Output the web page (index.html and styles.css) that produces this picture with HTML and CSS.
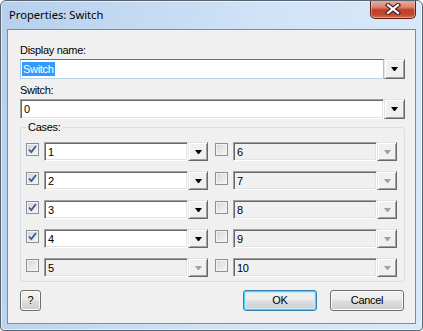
FILE: index.html
```html
<!DOCTYPE html>
<html>
<head>
<meta charset="utf-8">
<link rel="stylesheet" href="styles.css">
</head>
<body>
<div class="window">
  <div class="titlebar">
    <span class="title">Properties: Switch</span>
    <div class="close">
      <svg width="16" height="12" viewBox="0 0 16 12">
        <path d="M3 2 L13 10 M13 2 L3 10" stroke="#4a2018" stroke-width="4.4" stroke-linecap="square" fill="none"/>
        <path d="M3 2 L13 10 M13 2 L3 10" stroke="#ffffff" stroke-width="2.2" stroke-linecap="square" fill="none"/>
      </svg>
    </div>
  </div>
  <div class="client">
    <div class="label">Display name:</div>
    <div class="combo">
      <div class="edit focused"><span class="sel">Switch</span></div>
      <div class="drop wide"><svg width="7" height="4" viewBox="0 0 7 4"><polygon points="0,0 7,0 4,4 3,4" fill="#000"/></svg></div>
    </div>
    <div class="label second">Switch:</div>
    <div class="combo">
      <div class="edit sunken"><span class="txt">0</span></div>
      <div class="drop wide"><svg width="7" height="4" viewBox="0 0 7 4"><polygon points="0,0 7,0 4,4 3,4" fill="#000"/></svg></div>
    </div>
    <fieldset class="group">
      <legend>Cases:</legend>
      <div class="cases">
        <div class="case"><span class="cb checked"><svg width="11" height="11" viewBox="0 0 11 11"><path d="M2 5.5 L4.3 8 L9 2" stroke="#42578a" stroke-width="1.8" fill="none"/></svg></span><div class="edit sunken"><span class="txt">1</span></div><div class="drop"><svg width="7" height="4" viewBox="0 0 7 4"><polygon points="0,0 7,0 4,4 3,4" fill="#000"/></svg></div></div>
        <div class="case"><span class="cb checked"><svg width="11" height="11" viewBox="0 0 11 11"><path d="M2 5.5 L4.3 8 L9 2" stroke="#42578a" stroke-width="1.8" fill="none"/></svg></span><div class="edit sunken"><span class="txt">2</span></div><div class="drop"><svg width="7" height="4" viewBox="0 0 7 4"><polygon points="0,0 7,0 4,4 3,4" fill="#000"/></svg></div></div>
        <div class="case"><span class="cb checked"><svg width="11" height="11" viewBox="0 0 11 11"><path d="M2 5.5 L4.3 8 L9 2" stroke="#42578a" stroke-width="1.8" fill="none"/></svg></span><div class="edit sunken"><span class="txt">3</span></div><div class="drop"><svg width="7" height="4" viewBox="0 0 7 4"><polygon points="0,0 7,0 4,4 3,4" fill="#000"/></svg></div></div>
        <div class="case"><span class="cb checked"><svg width="11" height="11" viewBox="0 0 11 11"><path d="M2 5.5 L4.3 8 L9 2" stroke="#42578a" stroke-width="1.8" fill="none"/></svg></span><div class="edit sunken"><span class="txt">4</span></div><div class="drop"><svg width="7" height="4" viewBox="0 0 7 4"><polygon points="0,0 7,0 4,4 3,4" fill="#000"/></svg></div></div>
        <div class="case"><span class="cb"></span><div class="edit sunken disabled"><span class="txt">5</span></div><div class="drop disabled"><svg width="7" height="4" viewBox="0 0 7 4"><polygon points="0,0 7,0 4,4 3,4" fill="#a0a0a0"/></svg></div></div>
        <div class="case"><span class="cb"></span><div class="edit sunken disabled"><span class="txt">6</span></div><div class="drop disabled"><svg width="7" height="4" viewBox="0 0 7 4"><polygon points="0,0 7,0 4,4 3,4" fill="#a0a0a0"/></svg></div></div>
        <div class="case"><span class="cb"></span><div class="edit sunken disabled"><span class="txt">7</span></div><div class="drop disabled"><svg width="7" height="4" viewBox="0 0 7 4"><polygon points="0,0 7,0 4,4 3,4" fill="#a0a0a0"/></svg></div></div>
        <div class="case"><span class="cb"></span><div class="edit sunken disabled"><span class="txt">8</span></div><div class="drop disabled"><svg width="7" height="4" viewBox="0 0 7 4"><polygon points="0,0 7,0 4,4 3,4" fill="#a0a0a0"/></svg></div></div>
        <div class="case"><span class="cb"></span><div class="edit sunken disabled"><span class="txt">9</span></div><div class="drop disabled"><svg width="7" height="4" viewBox="0 0 7 4"><polygon points="0,0 7,0 4,4 3,4" fill="#a0a0a0"/></svg></div></div>
        <div class="case"><span class="cb"></span><div class="edit sunken disabled"><span class="txt">10</span></div><div class="drop disabled"><svg width="7" height="4" viewBox="0 0 7 4"><polygon points="0,0 7,0 4,4 3,4" fill="#a0a0a0"/></svg></div></div>
      </div>
    </fieldset>
    <div class="footer">
      <div class="btn help">?</div>
      <div class="spacer"></div>
      <div class="btn ok">OK</div>
      <div class="btn cancel">Cancel</div>
    </div>
  </div>
</div>
</body>
</html>
```

FILE: styles.css
```css
html, body {
  margin: 0;
  padding: 0;
  background: #ffffff;
}

body {
  font-family: "Liberation Sans", Arial, sans-serif;
  font-size: 11px;
  letter-spacing: -0.3px;
  color: #000;
}

.window {
  width: 423px;
  height: 331px;
  box-sizing: border-box;
  border: 1px solid #5a6470;
  border-radius: 6px 6px 4px 4px;
  background: linear-gradient(100deg, #b6d0ec 0%, #c6dcf3 35%, #d2e4f8 60%, #d9e9fa 100%);
  box-shadow: inset 0 0 0 1px rgba(255, 255, 255, 0.55);
  display: flex;
  flex-direction: column;
  overflow: hidden;
}

.titlebar {
  height: 28px;
  display: flex;
  justify-content: space-between;
  align-items: flex-start;
  padding-left: 8px;
  flex: none;
}

.title {
  font-family: "Noto Sans", "Open Sans", sans-serif;
  font-size: 11.2px;
  letter-spacing: 0;
  line-height: 16px;
  margin-top: 6px;
  color: #000;
}

.close {
  width: 46px;
  height: 19px;
  box-sizing: border-box;
  margin-right: 6px;
  margin-top: -1px;
  border: 1px solid #5b2018;
  border-top: none;
  border-radius: 0 0 5px 5px;
  background: linear-gradient(#eab0a2 0%, #d98470 40%, #c63f27 55%, #c2452d 80%, #d46e55 100%);
  box-shadow: inset 0 0 0 1px rgba(255, 210, 200, 0.45);
  display: flex;
  align-items: center;
  justify-content: center;
}

.client {
  flex: 1;
  margin: 0 6px 6px 6px;
  border: 1px solid #7d8b9b;
  background: #f0f0f0;
  padding: 14px 10px 0 12px;
  display: flex;
  flex-direction: column;
}

.label {
  height: 13px;
  line-height: 13px;
}

.label.second {
  margin-top: 5px;
}

.combo {
  display: flex;
  height: 20px;
  margin-top: 2px;
}

.edit {
  box-sizing: border-box;
  background: #fff;
  display: flex;
  align-items: center;
  flex: 1;
  min-width: 0;
  overflow: hidden;
  white-space: nowrap;
}

.edit.focused {
  border: 1px solid;
  border-color: #3d7bad #a4c3df #b7d3ea #a4c3df;
  padding-left: 1px;
}

.sel {
  background: #3399ff;
  color: #fff;
  line-height: 14px;
  padding: 0 1px 0 1px;
}

.edit.sunken {
  border: 1px solid;
  border-color: #a0a0a0 #ffffff #ffffff #a0a0a0;
  box-shadow: inset 1px 1px 0 #696969, inset -1px -1px 0 #e3e3e3;
  padding-left: 3px;
}

.edit.disabled {
  background: #f0f0f0;
}

.txt {
  line-height: 14px;
}

.drop {
  box-sizing: border-box;
  width: 20px;
  flex: none;
  background: #f0f0f0;
  border: 1px solid;
  border-color: #e3e3e3 #696969 #696969 #e3e3e3;
  box-shadow: inset 1px 1px 0 #ffffff, inset -1px -1px 0 #a0a0a0;
  display: flex;
  align-items: center;
  justify-content: center;
}

.drop.wide {
  width: 21px;
}

.drop svg {
  display: block;
}

.group {
  margin: 2px 0 0 0;
  padding: 8px 7px 4px 5px;
  border: 1px solid #d5dfe5;
  border-radius: 3px;
  min-width: 0;
}

.group legend {
  padding: 0 2px;
  line-height: 13px;
  height: 13px;
}

.cases {
  display: grid;
  grid-template-columns: 182px 182px;
  grid-template-rows: repeat(5, 19px);
  grid-auto-flow: column;
  column-gap: 7px;
  row-gap: 10px;
}

.case {
  display: flex;
  height: 19px;
}

.cb {
  box-sizing: border-box;
  width: 13px;
  height: 13px;
  margin-top: 1px;
  margin-right: 5px;
  flex: none;
  border: 1px solid #8e8f8f;
  background: linear-gradient(135deg, #d6d6d6 0%, #e6e6e6 50%, #f6f6f6 100%);
  box-shadow: inset 0 0 0 1px #f4f4f4;
  display: flex;
  align-items: center;
  justify-content: center;
}

.cb.checked {
  background: linear-gradient(135deg, #cdd3dc 0%, #e0e5ec 50%, #f4f6f9 100%);
}

.cb svg {
  display: block;
}

.case .edit {
  flex: none;
  width: 144px;
}

.footer {
  display: flex;
  margin-top: 8px;
  height: 21px;
  padding-right: 1px;
}

.spacer {
  flex: 1;
}

.btn {
  box-sizing: border-box;
  height: 21px;
  border: 1px solid #707070;
  border-radius: 3px;
  background: linear-gradient(#f2f2f2 0%, #ebebeb 48%, #dddddd 52%, #cfcfcf 100%);
  box-shadow: inset 0 0 0 1px #fbfbfb;
  display: flex;
  align-items: center;
  justify-content: center;
  line-height: 13px;
}

.btn.help {
  width: 21px;
}

.btn.ok {
  width: 74px;
  border-color: #3c7fb1;
  box-shadow: inset 0 0 0 1px #48d1f8, inset 0 0 0 2px #c6ecfb;
  margin-right: 13px;
}

.btn.cancel {
  width: 74px;
}
```
